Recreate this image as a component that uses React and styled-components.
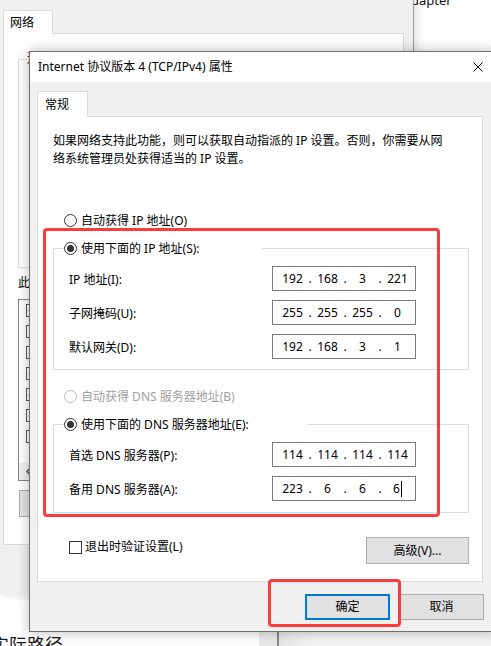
import React from 'react';
import styled, { createGlobalStyle } from 'styled-components';

const GlobalStyle = createGlobalStyle`
  html, body {
    margin: 0;
    padding: 0;
    background: #fff;
  }
  body {
    font-family: "Noto Sans", "Noto Sans CJK SC", sans-serif;
    font-size: 12px;
    color: #000;
  }
`;

const Desktop = styled.div`
  position: relative;
  width: 491px;
  height: 646px;
  overflow: hidden;
  background: #fff;
`;

/* windows behind the dialog */

const RightWindow = styled.div`
  position: absolute;
  left: 396px;
  top: 0;
  width: 110px;
  height: 600px;
  background: #fff;
`;

const PeekText = styled.div`
  margin: -8px 0 0 15px;
  font-size: 13px;
  line-height: 16px;
  color: #111;
`;

const BottomStrip = styled.div`
  position: absolute;
  left: 0;
  top: 595px;
  width: 491px;
  height: 51px;
  display: flex;
`;

const ExplorerPane = styled.div`
  width: 259px;
  background: #fff;
  display: flex;
  align-items: flex-end;
  overflow: hidden;
`;

const PathText = styled.div`
  font-size: 18px;
  line-height: 22px;
  margin: 0 0 -10px -9px;
  color: #1a1a1a;
  white-space: nowrap;
`;

const PaneGap = styled.div`
  width: 18px;
  background: #e9e9e9;
`;

const PaneDivider = styled.div`
  width: 2px;
  background: #8a8a8a;
`;

const PaneRest = styled.div`
  flex: 1;
  background: linear-gradient(90deg, #e6e6e6, #f3f3f3 30px);
`;

const BackWindow = styled.div`
  position: absolute;
  left: 0;
  top: 0;
  width: 413px;
  height: 595px;
  box-sizing: border-box;
  padding: 10px 0 0 3px;
  background: #f0f0f0;
  box-shadow: 1px 0 0 #9a9a9a, 4px 0 8px rgba(0, 0, 0, 0.12);
`;

const Tab = styled.div`
  position: relative;
  z-index: 1;
  display: flex;
  align-items: center;
  box-sizing: border-box;
  width: ${p => p.$w}px;
  height: ${p => p.$h}px;
  padding-left: ${p => p.$pad}px;
  margin-bottom: -1px;
  background: #fff;
  border: 1px solid #d9d9d9;
  border-bottom: none;
  line-height: 16px;
`;

const TabPanel = styled.div`
  box-sizing: border-box;
  width: ${p => p.$w}px;
  height: ${p => p.$h}px;
  background: #fff;
  border: 1px solid #d9d9d9;
  display: flex;
  flex-direction: column;
  padding: ${p => p.$pad};
`;

const BackGroup = styled.fieldset`
  margin: 0;
  padding: 0;
  width: 380px;
  height: 217px;
  box-sizing: border-box;
  border: 1px solid #dcdcdc;

  legend {
    margin-left: 8px;
    padding: 0;
    line-height: 16px;
  }
`;

/* only the sliver left of the dialog is ever seen */
const Peek = styled.span`
  display: block;
  width: ${p => p.$w}px;
  overflow: hidden;
  white-space: nowrap;
`;

const BackLabel = styled.div`
  margin-top: 7px;
  line-height: 16px;
`;

const ListBox = styled.div`
  margin-top: 8px;
  width: 380px;
  height: 182px;
  box-sizing: border-box;
  border: 1px solid #828282;
  display: flex;
  flex-direction: column;
`;

const ListRow = styled.div`
  height: 21px;
  display: flex;
  align-items: center;
  padding-left: 7px;
`;

const HScroll = styled.div`
  margin-top: auto;
  height: 17px;
  background: #f0f0f0;
  display: flex;
  align-items: center;
  padding-left: 7px;
`;

const BackButton = styled.div`
  margin: 9px 0 0 1px;
  width: 75px;
  height: 27px;
  box-sizing: border-box;
  background: #e1e1e1;
  border: 1px solid #adadad;
`;

/* the dialog */

const Dialog = styled.div`
  position: absolute;
  left: 29px;
  top: 51px;
  width: 466px;
  height: 581px;
  box-sizing: border-box;
  border: 1px solid #707070;
  background: #f0f0f0;
  box-shadow: 0 0 12px rgba(0, 0, 0, 0.28);
  display: flex;
  flex-direction: column;
`;

const TitleBar = styled.div`
  height: 30px;
  flex-shrink: 0;
  background: #fff;
  display: flex;
  align-items: center;
  justify-content: space-between;
  padding: 0 11px 0 8px;
  line-height: 16px;
  white-space: nowrap;
`;

const DialogBody = styled.div`
  flex: 1;
  display: flex;
  flex-direction: column;
  padding: 9px 10px 11px 7px;
`;

const Description = styled.div`
  line-height: 18px;
  white-space: nowrap;
`;

const RadioRow = styled.label`
  display: flex;
  align-items: center;
  gap: 4px;
  height: 16px;
  margin-left: ${p => p.$indent || 0}px;
  margin-top: ${p => p.$top || 0}px;
  color: ${p => (p.$disabled ? '#a0a0a0' : '#000')};
  white-space: nowrap;
`;

const RadioCircle = styled.span`
  width: 13px;
  height: 13px;
  box-sizing: border-box;
  border-radius: 50%;
  border: 1px solid ${p => (p.$disabled ? '#bcbcbc' : '#333')};
  background: #fff;
  display: flex;
  align-items: center;
  justify-content: center;

  &::after {
    content: '';
    display: ${p => (p.$checked ? 'block' : 'none')};
    width: 7px;
    height: 7px;
    border-radius: 50%;
    background: #333;
  }
`;

const Group = styled.fieldset`
  margin: ${p => p.$top}px 0 0 0;
  padding: 10px 52px ${p => p.$bottom}px 15px;
  border: 1px solid #dcdcdc;
  display: flex;
  flex-direction: column;
  gap: 9px;

  legend {
    margin-left: -5px;
    padding: 0 ${p => p.$legendGap}px 0 0;
  }
`;

const FieldRow = styled.div`
  height: 25px;
  display: flex;
  align-items: center;
  justify-content: space-between;
  white-space: nowrap;
`;

const IpBox = styled.div`
  width: 144px;
  height: 25px;
  box-sizing: border-box;
  border: 1px solid #7a7a7a;
  background: #fff;
  display: flex;
  align-items: center;
  padding-left: 6px;
  line-height: 16px;
`;

const Octet = styled.span`
  width: 27px;
  display: flex;
  justify-content: center;
  align-items: center;
`;

const Dot = styled.span`
  width: 8px;
  text-align: center;
`;

const Caret = styled.span`
  width: 1px;
  height: 16px;
  background: #000;
  margin-left: 1px;
`;

const BottomRow = styled.div`
  margin-top: 24px;
  display: flex;
  justify-content: space-between;
  align-items: flex-start;
`;

const CheckRow = styled.label`
  display: flex;
  align-items: center;
  gap: 3px;
  margin: 2px 0 0 16px;
  line-height: 16px;
`;

const CheckBox = styled.span`
  width: 13px;
  height: 13px;
  box-sizing: border-box;
  border: 1px solid ${p => p.$color || '#333'};
  background: #fff;
  display: flex;
  align-items: center;
  justify-content: center;
`;

const Button = styled.div`
  width: ${p => p.$w}px;
  height: ${p => p.$h}px;
  box-sizing: border-box;
  background: #e1e1e1;
  border: ${p => (p.$default ? '2px solid #0078d7' : '1px solid #adadad')};
  display: flex;
  align-items: center;
  justify-content: center;
  line-height: 16px;
`;

const ButtonRow = styled.div`
  margin-top: 12px;
  display: flex;
  justify-content: flex-end;
  gap: 9px;
`;

const Annotation = styled.div`
  position: absolute;
  left: ${p => p.$x}px;
  top: ${p => p.$y}px;
  width: ${p => p.$w}px;
  height: ${p => p.$h}px;
  box-sizing: border-box;
  border: 3px solid #fb3c3c;
  border-radius: 4px;
  pointer-events: none;
`;

const CloseIcon = () => (
  <svg width="10" height="10" viewBox="0 0 10 10">
    <path d="M0.5 0.5 L9.5 9.5 M9.5 0.5 L0.5 9.5" stroke="#000" strokeWidth="1" fill="none" />
  </svg>
);

const Tick = () => (
  <svg width="9" height="9" viewBox="0 0 9 9">
    <path d="M1 4.5 L3.5 7 L8 1.5" stroke="#000" strokeWidth="1.6" fill="none" />
  </svg>
);

const Radio = ({ checked, disabled, indent, top, children }) => (
  <RadioRow $indent={indent} $top={top} $disabled={disabled}>
    <RadioCircle $checked={checked} $disabled={disabled} />
    {children}
  </RadioRow>
);

const IpField = ({ parts, caret }) => (
  <IpBox>
    {parts.map((p, i) => (
      <React.Fragment key={i}>
        {i > 0 && <Dot>.</Dot>}
        <Octet>
          {p}
          {caret && i === parts.length - 1 && <Caret />}
        </Octet>
      </React.Fragment>
    ))}
  </IpBox>
);

const itemChecks = [true, false, true, true, true, true, false];

export default function App() {
  return (
    <Desktop>
      <GlobalStyle />

      <RightWindow>
        <PeekText>dapter</PeekText>
      </RightWindow>

      <BottomStrip>
        <ExplorerPane>
          <PathText>实际路径</PathText>
        </ExplorerPane>
        <PaneGap />
        <PaneDivider />
        <PaneRest />
      </BottomStrip>

      <BackWindow>
        <Tab $w={50} $h={24} $pad={6}>网络</Tab>
        <TabPanel $w={401} $h={512} $pad="17px 0 0 14px">
          <BackGroup>
            <legend>
              <Peek $w={3}>连</Peek>
            </legend>
          </BackGroup>
          <BackLabel>
            <Peek $w={11}>此</Peek>
          </BackLabel>
          <ListBox>
            {itemChecks.map((on, i) => (
              <ListRow key={i}>
                <CheckBox $color="#555">{on && <Tick />}</CheckBox>
              </ListRow>
            ))}
            <HScroll>
              <svg width="6" height="9" viewBox="0 0 6 9">
                <path d="M5 0.5 L1 4.5 L5 8.5" stroke="#606060" strokeWidth="1.6" fill="none" />
              </svg>
            </HScroll>
          </ListBox>
          <BackButton />
        </TabPanel>
      </BackWindow>

      <Dialog>
        <TitleBar>
          <span>Internet 协议版本 4 (TCP/IPv4) 属性</span>
          <CloseIcon />
        </TitleBar>
        <DialogBody>
          <Tab $w={51} $h={26} $pad={7}>常规</Tab>
          <TabPanel $w={446} $h={466} $pad="15px 13px 0 15px">
            <Description>
              如果网络支持此功能，则可以获取自动指派的 IP 设置。否则，你需要从网
              <br />
              络系统管理员处获得适当的 IP 设置。
            </Description>

            <Radio indent={11} top={44}>自动获得 IP 地址(O)</Radio>

            <Group $top={12} $bottom={10} $legendGap={62}>
              <legend>
                <Radio checked>使用下面的 IP 地址(S):</Radio>
              </legend>
              <FieldRow>
                <span>IP 地址(I):</span>
                <IpField parts={['192', '168', '3', '221']} />
              </FieldRow>
              <FieldRow>
                <span>子网掩码(U):</span>
                <IpField parts={['255', '255', '255', '0']} />
              </FieldRow>
              <FieldRow>
                <span>默认网关(D):</span>
                <IpField parts={['192', '168', '3', '1']} />
              </FieldRow>
            </Group>

            <Radio indent={11} top={18} disabled>自动获得 DNS 服务器地址(B)</Radio>

            <Group $top={12} $bottom={11} $legendGap={58}>
              <legend>
                <Radio checked>使用下面的 DNS 服务器地址(E):</Radio>
              </legend>
              <FieldRow>
                <span>首选 DNS 服务器(P):</span>
                <IpField parts={['114', '114', '114', '114']} />
              </FieldRow>
              <FieldRow>
                <span>备用 DNS 服务器(A):</span>
                <IpField parts={['223', '6', '6', '6']} caret />
              </FieldRow>
            </Group>

            <BottomRow>
              <CheckRow>
                <CheckBox />
                退出时验证设置(L)
              </CheckRow>
              <Button $w={103} $h={27}>高级(V)...</Button>
            </BottomRow>
          </TabPanel>

          <ButtonRow>
            <Button $w={85} $h={26} $default>确定</Button>
            <Button $w={85} $h={26}>取消</Button>
          </ButtonRow>
        </DialogBody>
      </Dialog>

      <Annotation $x={43} $y={228} $w={397} $h={289} />
      <Annotation $x={268} $y={579} $w={133} $h={48} />
    </Desktop>
  );
}
